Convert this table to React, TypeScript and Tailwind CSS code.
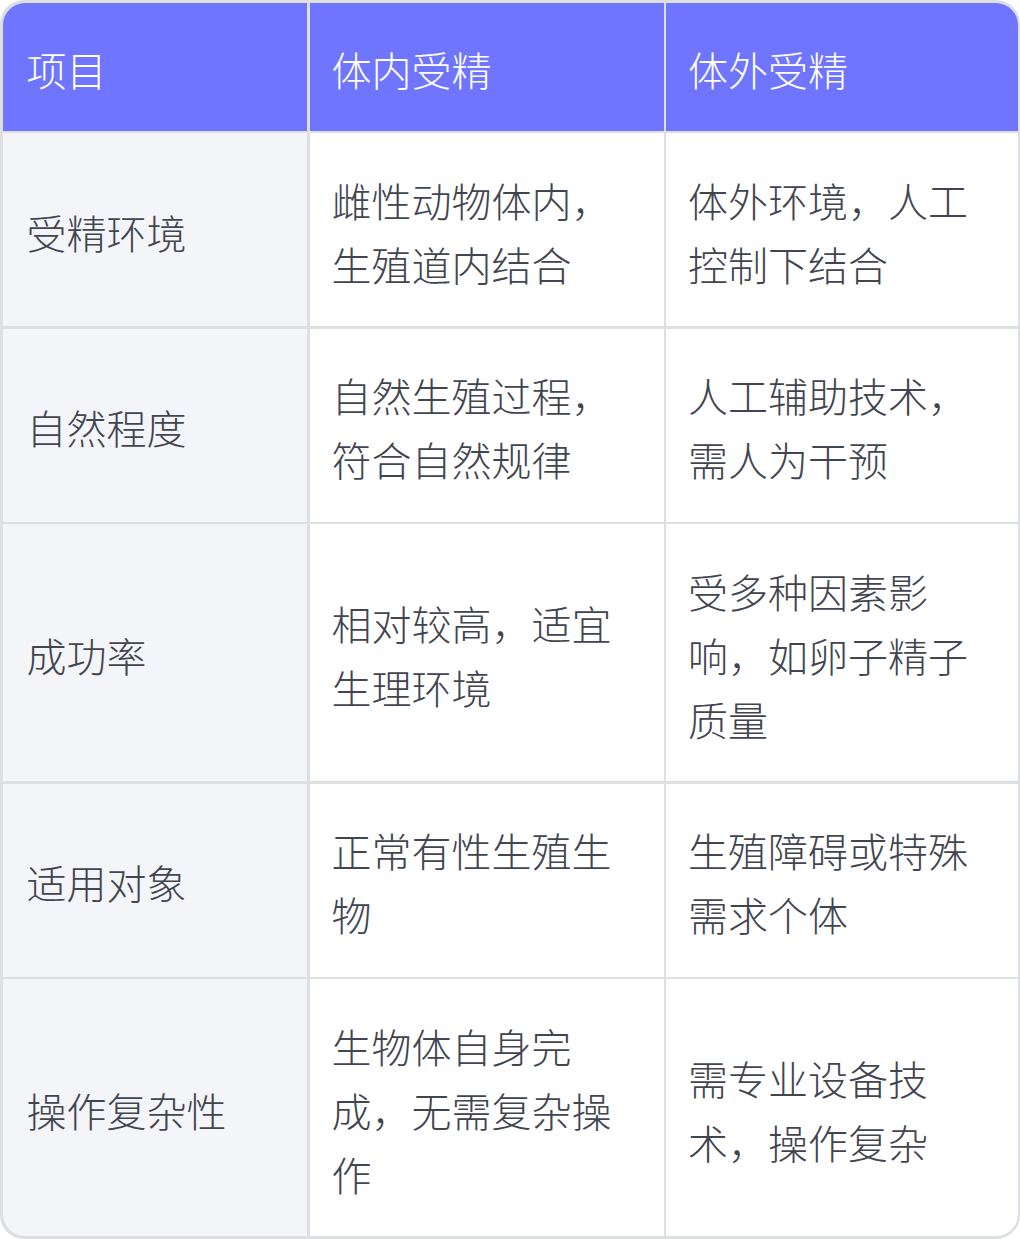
import React from "react";

const headers = ["项目", "体内受精", "体外受精"];
const rows: string[][] = [
  ["受精环境", "雌性动物体内，生殖道内结合", "体外环境，人工控制下结合"],
  ["自然程度", "自然生殖过程，符合自然规律", "人工辅助技术，需人为干预"],
  ["成功率", "相对较高，适宜生理环境", "受多种因素影响，如卵子精子质量"],
  ["适用对象", "正常有性生殖生物", "生殖障碍或特殊需求个体"],
  ["操作复杂性", "生物体自身完成，无需复杂操作", "需专业设备技术，操作复杂"],
];

export default function App() {
  return (
    <div
      className="w-[1020px] bg-white font-extralight"
      style={{ fontFamily: '"Noto Sans CJK SC", "Noto Sans", sans-serif' }}
    >
      <div className="rounded-[24px] bg-[#DEDFE3] p-[2.5px]">
        <div className="grid grid-cols-[304.5px_354px_1fr] gap-[2.5px] overflow-hidden rounded-[22px] bg-[#DEDFE3] text-[40px] leading-[64px]">
          {headers.map((h, i) => (
            <div
              key={h}
              className={`flex items-center bg-[#7075FF] pt-[34px] pb-[30px] text-white ${i === 0 ? "px-6" : "pl-[22px] pr-6"}`}
            >
              {h}
            </div>
          ))}
          {rows.map((r) => (
            <React.Fragment key={r[0]}>
              <div className="flex items-center bg-[#F4F5F9] px-6 pt-[34.5px] pb-[30.5px] text-[#41454F]">
                {r[0]}
              </div>
              <div className="flex items-center bg-white pl-[22px] pr-6 pt-[34.5px] pb-[30.5px] text-[#41454F]">
                {r[1]}
              </div>
              <div className="flex items-center bg-white pl-[22px] pr-6 pt-[34.5px] pb-[30.5px] text-[#41454F]">
                {r[2]}
              </div>
            </React.Fragment>
          ))}
        </div>
      </div>
    </div>
  );
}
